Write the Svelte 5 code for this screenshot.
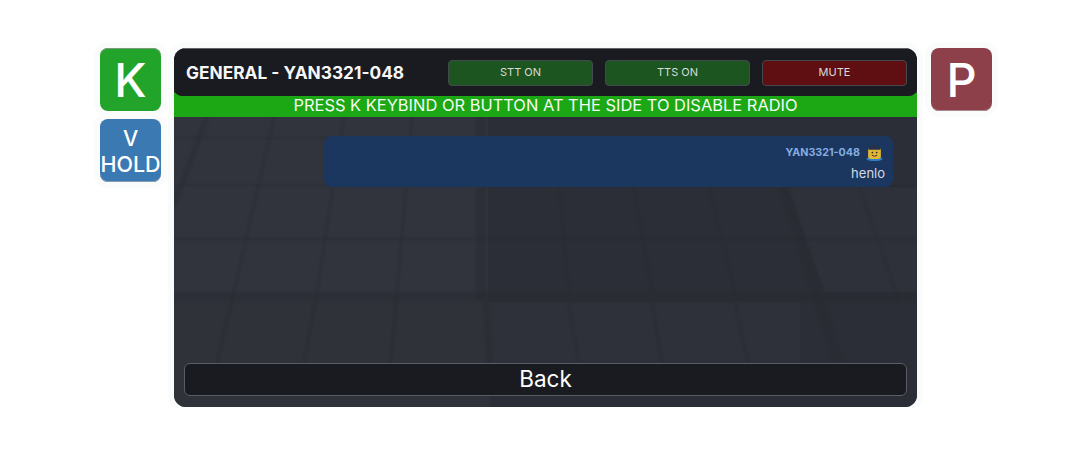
<script>
  const lines = [
    [207,117,174,205,5],[274,117,234,292,2.5],[344,117,317,292,2.5],[412,117,397,292,2.5],
    [234,292,217,362,3],[317,292,304,362,3],[397,292,391,362,3],
    [559,187,569,292,2],[634,187,652,292,2.5],[709,187,735,292,2.5],
    [569,302,579,365,3],[652,302,662,365,3],[735,302,748,365,3],
    [859,187,899,300,2.5],[481,117,481,300,11],[784,187,839,365,10],[486,302,490,365,6]
  ];
  const rows = [
    [174,138,480,138,2],[174,185,480,185,2],[174,239,917,239,2.5],[174,297,917,297,10],[787,186,917,186,2]
  ];
</script>

<div class="page">
  <div class="side">
    <button class="key green">K</button>
    <button class="key blue small">V<br />HOLD</button>
  </div>

  <main class="panel">
    <header class="top">
      <h1>GENERAL - YAN3321-048</h1>
      <div class="toggles">
        <button class="toggle on">STT ON</button>
        <button class="toggle on">TTS ON</button>
        <button class="toggle off">MUTE</button>
      </div>
    </header>
    <div class="status">PRESS K KEYBIND OR BUTTON AT THE SIDE TO DISABLE RADIO</div>
    <section class="body">
      <svg class="floor" viewBox="174 117 743 290" preserveAspectRatio="none" aria-hidden="true">
        <rect x="488" y="117" width="429" height="290" fill="#2b2e36" />
        <rect x="174" y="302" width="316" height="105" fill="#2f3239" />
        <polygon points="787,187 917,187 917,292 825,292" fill="#2e313a" />
        <rect x="490" y="302" width="310" height="62" fill="#2e313a" />
        <g class="soft">
          {#each rows as r}
            <line x1={r[0]} y1={r[1]} x2={r[2]} y2={r[3]} stroke-width={r[4]} />
          {/each}
          {#each lines as l}
            <line x1={l[0]} y1={l[1]} x2={l[2]} y2={l[3]} stroke-width={l[4]} />
          {/each}
        </g>
      </svg>
      <div class="messages">
        <article class="message">
          <div class="meta">
            <span class="name">YAN3321-048</span>
            <svg class="avatar" viewBox="0 0 16 16" aria-hidden="true">
              <ellipse cx="8" cy="14" rx="7.5" ry="2" fill="#2f7fc4" />
              <rect x="2" y="3.500" width="12" height="10.500" rx="2.500" fill="#e0b634" />
              <path d="M2.500 5.500 Q2.500 1 8 1 Q13.500 1 13.500 5.500 Z" fill="#26324a" />
              <circle cx="6" cy="8" r=".8" fill="#222" />
              <circle cx="10" cy="8" r=".8" fill="#222" />
              <path d="M5.500 10.500 Q8 12.500 10.500 10.500" stroke="#222" stroke-width=".8" fill="none" />
            </svg>
          </div>
          <p>henlo</p>
        </article>
      </div>
      <button class="back">Back</button>
    </section>
  </main>

  <div class="side">
    <button class="key red">P</button>
  </div>
</div>

<style>
  :global(body) {
    margin: 0;
    background: #fff;
  }
  .page {
    display: flex;
    align-items: flex-start;
    padding: 48px 0 0 100px;
    font-family: Inter, "Liberation Sans", sans-serif;
    color: #fff;
  }
  button {
    font-family: inherit;
    padding: 0;
    cursor: pointer;
  }
  .side {
    display: flex;
    flex-direction: column;
    gap: 8px;
    width: 61px;
    flex: none;
  }
  .key {
    width: 61px;
    height: 63px;
    border: none;
    border-radius: 8px;
    color: #fff;
    font-size: 47px;
    font-weight: 500;
    line-height: 1;
    overflow: visible;
    white-space: nowrap;
  }
  .green {
    background: #22a42a;
    box-shadow: 0 0 0 6px #fafbfb, inset 0 1px 0 #7a9c7c;
  }
  .blue {
    background: #3b79b3;
    box-shadow: 0 0 0 6px #fafbfb, inset 0 -1px 0 #8a9cae;
  }
  .red {
    background: #8d3f4a;
    box-shadow: 0 0 0 6px #fafbfb, inset 0 -1px 0 #a88a92;
  }
  .small {
    font-size: 21.500px;
    font-weight: 500;
    line-height: 26px;
  }
  .panel {
    width: 743px;
    height: 359px;
    margin: 0 14px 0 13px;
    flex: none;
    display: flex;
    flex-direction: column;
    border-radius: 12px;
    overflow: hidden;
    background: #31343c;
    position: relative;
    box-shadow: 0 0 0 6px #fafbfb;
  }
  .top {
    height: 48px;
    box-sizing: border-box;
    display: flex;
    align-items: center;
    padding: 0 10px 0 12px;
    background: #1a1b20;
    border-top: 1px solid #62656c;
    border-radius: 0 0 8px 8px;
    position: relative;
    z-index: 1;
  }
  h1 {
    margin: 0;
    width: 262px;
    flex: none;
    font-size: 17.300px;
    font-weight: 700;
    white-space: nowrap;
    color: #f6f6f6;
  }
  .toggles {
    display: flex;
    gap: 12px;
    flex: 1;
  }
  .toggle {
    flex: 1;
    height: 26px;
    border: 1.500px solid #45484d;
    border-radius: 4px;
    color: #d8dcd8;
    font-size: 11px;
    line-height: 1;
  }
  .on {
    background: #1d5520;
  }
  .off {
    background: #5f0e12;
  }
  .status {
    height: 24px;
    margin-top: -3px;
    padding-top: 2px;
    box-sizing: border-box;
    background: #1ba814;
    color: #f4fbf2;
    font-size: 16.450px;
    line-height: 20px;
    text-align: center;
    white-space: nowrap;
  }
  .body {
    flex: 1;
    position: relative;
    display: flex;
    flex-direction: column;
    justify-content: space-between;
    padding: 19px 10px 11px;
  }
  .floor {
    position: absolute;
    inset: 0;
    width: 100%;
    height: 100%;
  }
  .soft {
    stroke: #282a31;
    stroke-opacity: 0.45;
    filter: blur(0.8px);
  }
  .messages {
    position: relative;
    display: flex;
    justify-content: flex-end;
    padding-right: 14px;
  }
  .message {
    width: 569px;
    height: 51px;
    box-sizing: border-box;
    padding: 7px 8px 0;
    border-radius: 8px;
    background: #1b3760;
    text-align: right;
  }
  .meta {
    display: flex;
    justify-content: flex-end;
    align-items: center;
    gap: 6px;
    height: 18px;
  }
  .name {
    font-size: 10.700px;
    font-weight: 700;
    color: #85ace0;
  }
  .avatar {
    width: 17px;
    height: 17px;
    margin-right: 2px;
  }
  p {
    margin: 3px 0 0;
    font-size: 13px;
    line-height: 18px;
    color: #d5dae2;
  }
  .back {
    position: relative;
    width: 100%;
    height: 33px;
    border: 1.500px solid #5a5d63;
    border-radius: 6px;
    background: #1a1b20;
    color: #fff;
    font-size: 22.500px;
    line-height: 1;
  }
</style>
